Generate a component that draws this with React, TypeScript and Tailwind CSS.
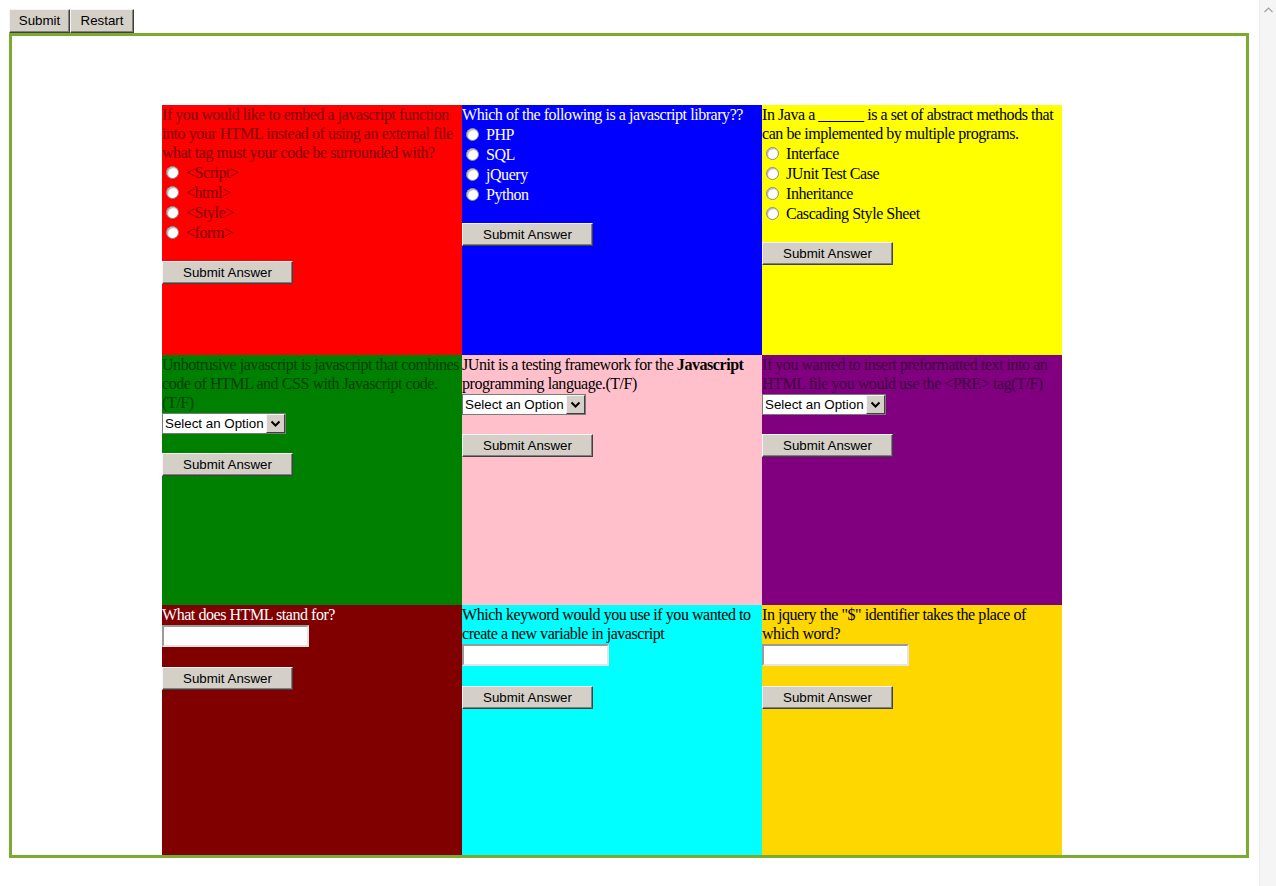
import React from "react";

const btnCls =
  "bg-[#d4d0c8] text-black border border-t-[#f4f4f4] border-l-[#f4f4f4] border-r-[#404040] border-b-[#404040] shadow-[inset_-1px_-1px_0_#808080] font-['Liberation_Sans',Arial,sans-serif] text-[13.33px] leading-none tracking-normal";

function AnswerBtn() {
  return (
    <button type="button" className={`${btnCls} block w-[131px] h-[23px]`}>
      Submit Answer
    </button>
  );
}

function Radio({ label }: { label: string }) {
  return (
    <label className="flex items-center h-[20px] whitespace-nowrap">
      <input
        type="radio"
        name="r"
        className="appearance-none ml-[4px] mr-[7px] w-[13px] h-[13px] rounded-full bg-white border border-[#8a8a8a] shadow-[inset_1px_1px_1px_#b0b0b0]"
      />
      <span>{label}</span>
    </label>
  );
}

function SelectBox() {
  return (
    <div className="h-[22px] pt-[1px]">
      <div className="flex w-[124px] h-[21px] bg-white border border-[#7a7a7a] font-['Liberation_Sans',Arial,sans-serif] text-[13.33px] tracking-normal text-black">
        <span className="flex-1 pl-[2px] leading-[19px] whitespace-nowrap overflow-hidden">Select an Option</span>
        <span className="w-[19px] h-[19px] bg-[#d4d0c8] border border-t-[#f4f4f4] border-l-[#f4f4f4] border-r-[#404040] border-b-[#404040] flex items-center justify-center">
          <svg width="11" height="8" viewBox="0 0 11 8">
            <polyline points="1.5,1.5 5.5,5.5 9.5,1.5" fill="none" stroke="#000" strokeWidth="2" />
          </svg>
        </span>
      </div>
    </div>
  );
}

function TextBox() {
  return (
    <div className="h-[24px] pt-[1px]">
      <input
        type="text"
        className="block w-[147px] h-[22px] bg-white border-2 border-t-[#9a9a9a] border-l-[#9a9a9a] border-r-[#e4e4e4] border-b-[#e4e4e4] outline-none"
      />
    </div>
  );
}

function Q({ lines }: { lines: React.ReactNode[] }) {
  return (
    <div className="whitespace-nowrap">
      {lines.map((l, i) => (
        <div key={i}>{l}</div>
      ))}
    </div>
  );
}

function Cell({ bg, color, children }: { bg: string; color: string; children: React.ReactNode }) {
  return <div className={`w-[300px] h-[250px] overflow-hidden ${bg} ${color}`}>{children}</div>;
}

const Gap = () => <div className="h-[19px]" />;

export default function App() {
  return (
    <div className="flex w-[1276px] h-[886px] bg-white overflow-hidden font-['Liberation_Serif','Times_New_Roman',serif] text-[16px] leading-[19px] tracking-[-0.45px]">
      <div className="w-[1259px] pl-[9px] pt-[9px]">
        <div className="flex">
          <button type="button" className={`${btnCls} w-[61px] h-[24px]`}>
            Submit
          </button>
          <button type="button" className={`${btnCls} w-[64px] h-[24px]`}>
            Restart
          </button>
        </div>
        <div className="w-[1240px] border-[3px] border-[#7aab2f] pt-[69px] pl-[150px]">
          <div className="grid grid-cols-[300px_300px_300px] w-[900px]">
            <Cell bg="bg-[#ff0000]" color="text-[#800000]">
              <Q
                lines={[
                  "If you would like to embed a javascript function",
                  "into your HTML instead of using an external file",
                  "what tag must your code be surrounded with?",
                ]}
              />
              <Radio label="<Script>" />
              <Radio label="<html>" />
              <Radio label="<Style>" />
              <Radio label="<form>" />
              <Gap />
              <AnswerBtn />
            </Cell>
            <Cell bg="bg-[#0000ff]" color="text-white">
              <Q lines={["Which of the following is a javascript library??"]} />
              <Radio label="PHP" />
              <Radio label="SQL" />
              <Radio label="jQuery" />
              <Radio label="Python" />
              <Gap />
              <AnswerBtn />
            </Cell>
            <Cell bg="bg-[#ffff00]" color="text-black">
              <Q
                lines={[
                  "In Java a ______ is a set of abstract methods that",
                  "can be implemented by multiple programs.",
                ]}
              />
              <Radio label="Interface" />
              <Radio label="JUnit Test Case" />
              <Radio label="Inheritance" />
              <Radio label="Cascading Style Sheet" />
              <Gap />
              <AnswerBtn />
            </Cell>

            <Cell bg="bg-[#008000]" color="text-[#003f00]">
              <Q
                lines={[
                  "Unbotrusive javascript is javascript that combines",
                  "code of HTML and CSS with Javascript code.",
                  "(T/F)",
                ]}
              />
              <SelectBox />
              <Gap />
              <AnswerBtn />
            </Cell>
            <Cell bg="bg-[#ffc0cb]" color="text-black">
              <Q
                lines={[
                  <>
                    JUnit is a testing framework for the <b>Javascript</b>
                  </>,
                  "programming language.(T/F)",
                ]}
              />
              <SelectBox />
              <Gap />
              <AnswerBtn />
            </Cell>
            <Cell bg="bg-[#800080]" color="text-[#400040]">
              <Q
                lines={[
                  "If you wanted to insert preformatted text into an",
                  "HTML file you would use the <PRE> tag(T/F)",
                ]}
              />
              <SelectBox />
              <Gap />
              <AnswerBtn />
            </Cell>

            <Cell bg="bg-[#800000]" color="text-white">
              <Q lines={["What does HTML stand for?"]} />
              <TextBox />
              <Gap />
              <AnswerBtn />
            </Cell>
            <Cell bg="bg-[#00ffff]" color="text-black">
              <Q
                lines={[
                  "Which keyword would you use if you wanted to",
                  "create a new variable in javascript",
                ]}
              />
              <TextBox />
              <Gap />
              <AnswerBtn />
            </Cell>
            <Cell bg="bg-[#ffd700]" color="text-black">
              <Q
                lines={[
                  'In jquery the "$" identifier takes the place of',
                  "which word?",
                ]}
              />
              <TextBox />
              <Gap />
              <AnswerBtn />
            </Cell>
          </div>
        </div>
      </div>
      <div className="w-[17px] h-[886px] bg-[#f5f5f5] border-l border-[#ececec] flex justify-center pt-[7px]">
        <svg width="9" height="6" viewBox="0 0 9 6">
          <polyline points="0.5,5 4.5,1 8.5,5" fill="none" stroke="#a0a0a0" strokeWidth="1.2" />
        </svg>
      </div>
    </div>
  );
}
